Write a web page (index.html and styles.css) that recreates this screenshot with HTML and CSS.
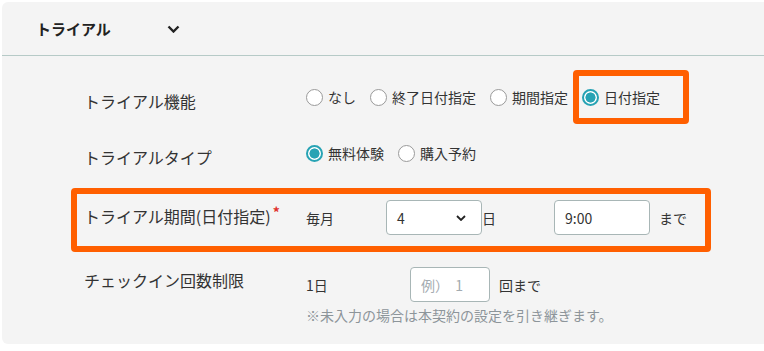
FILE: index.html
```html
<!DOCTYPE html>
<html lang="ja">
<head>
  <meta charset="UTF-8" />
  <meta name="viewport" content="width=device-width, initial-scale=1.0"/>
  <title>トライアル設定</title>
  <link rel="stylesheet" href="styles.css">
</head>
<body>
  <section class="panel">
    <div class="panel-head">
      <h2 class="panel-title">トライアル</h2>
      <svg class="toggle" viewBox="0 0 13 8"><path d="M1.5 1.5 L6.5 6.5 L11.5 1.5" fill="none" stroke="#222" stroke-width="2.4"/></svg>
    </div>

    <div class="panel-body">
      <div class="row row-choice">
        <div class="label">トライアル機能</div>
        <div class="choices">
          <label class="option"><input type="radio" name="mode" class="radio">なし</label>
          <label class="option"><input type="radio" name="mode" class="radio">終了日付指定</label>
          <label class="option"><input type="radio" name="mode" class="radio">期間指定</label>
          <label class="option"><input type="radio" name="mode" class="radio" checked>日付指定</label>
        </div>
      </div>

      <div class="row row-choice row-type">
        <div class="label">トライアルタイプ</div>
        <div class="choices">
          <label class="option"><input type="radio" name="type" class="radio" checked>無料体験</label>
          <label class="option"><input type="radio" name="type" class="radio">購入予約</label>
        </div>
      </div>

      <div class="row row-period">
        <div class="label">トライアル期間(日付指定)<span class="req">*</span></div>
        <div class="fields">
          <span class="unit unit-month">毎月</span>
          <div class="select">
            <span>4</span>
            <svg class="caret" viewBox="0 0 10 6"><path d="M1 1 L5 5 L9 1" fill="none" stroke="#222" stroke-width="1.8"/></svg>
          </div>
          <span class="unit unit-day">日</span>
          <input class="field" type="text" value="9:00">
          <span class="suffix">まで</span>
        </div>
      </div>

      <div class="row row-checkin">
        <div class="label">チェックイン回数制限</div>
        <div class="stack">
          <div class="fields">
            <span class="unit unit-per">1日</span>
            <input class="field field-count" type="text" placeholder="例）  1">
            <span class="suffix">回まで</span>
          </div>
          <p class="note">※未入力の場合は本契約の設定を引き継ぎます。</p>
        </div>
      </div>
    </div>

    <div class="mark mark-mode"></div>
    <div class="mark mark-period"></div>
  </section>
</body>
</html>
```

FILE: styles.css
```css
* {
  margin: 0;
  padding: 0;
  box-sizing: border-box;
}

body {
  background: #fff;
  font-family: "Noto Sans CJK JP", "Noto Sans", sans-serif;
  color: #333;
  overflow: hidden;
}

.panel {
  position: relative;
  margin: 2px 0 0 2px;
  height: 342px;
  background: #f4f4f4;
  border-radius: 6px 0 0 6px;
}

.panel-head {
  height: 54px;
  display: flex;
  align-items: center;
  padding-left: 34px;
  border-bottom: 1px solid #b6cac7;
}

.panel-title {
  font-size: 15px;
  font-weight: 700;
  color: #222;
}

.toggle {
  margin-left: 56px;
  width: 13px;
  height: 8px;
}

.panel-body {
  padding: 29px 0 0 82px;
}

.row {
  display: flex;
  align-items: flex-start;
}

.label {
  width: 222px;
  font-size: 16px;
  line-height: 24px;
}

.row-choice .label {
  padding-top: 4px;
}

.row-type {
  margin-top: 28px;
}

.row-period {
  margin-top: 31px;
}

.row-checkin {
  margin-top: 32px;
}

.row-checkin .label {
  padding-top: 1px;
}

.req {
  color: #e0302a;
  font-size: 14px;
  font-weight: 700;
  vertical-align: 5px;
  margin-left: 2px;
}

/* radios */
.choices {
  display: flex;
  align-items: center;
  height: 24px;
}

.option {
  display: flex;
  align-items: center;
  font-size: 14px;
  margin-right: 14px;
}

.radio {
  appearance: none;
  width: 17px;
  height: 17px;
  margin-right: 5px;
  border: 1px solid #9a9a9a;
  border-radius: 50%;
  background: #fff;
}

.radio:checked {
  border: 2px solid #27a3b4;
  background: radial-gradient(circle, #27a3b4 0 4.8px, #fff 5.3px);
}

/* inputs */
.fields {
  display: flex;
  align-items: center;
  height: 35px;
  font-size: 14px;
}

.unit-month {
  width: 80px;
}

.unit-day {
  width: 72px;
}

.unit-per {
  width: 104px;
}

.select,
.field {
  width: 96px;
  height: 35px;
  background: #fff;
  border: 1px solid #a8b6b6;
  border-radius: 4px;
  padding: 0 10px;
  font-family: inherit;
  font-size: 14px;
  color: #333;
}

.select {
  display: flex;
  align-items: center;
  justify-content: space-between;
  padding-right: 15px;
}

.caret {
  width: 10px;
  height: 6px;
}

.field-count {
  width: 80px;
}

.field::placeholder {
  color: #a3abb0;
}

.suffix {
  margin-left: 9px;
}

.note {
  margin-top: 3px;
  font-size: 14px;
  line-height: 20px;
  color: #8d959a;
}

/* highlight frames */
.mark {
  position: absolute;
  border: 6px solid #ff5f00;
  border-radius: 4px;
}

.mark-mode {
  left: 571px;
  top: 68px;
  width: 116px;
  height: 54px;
}

.mark-period {
  left: 69px;
  top: 186px;
  width: 640px;
  height: 64px;
}
```
